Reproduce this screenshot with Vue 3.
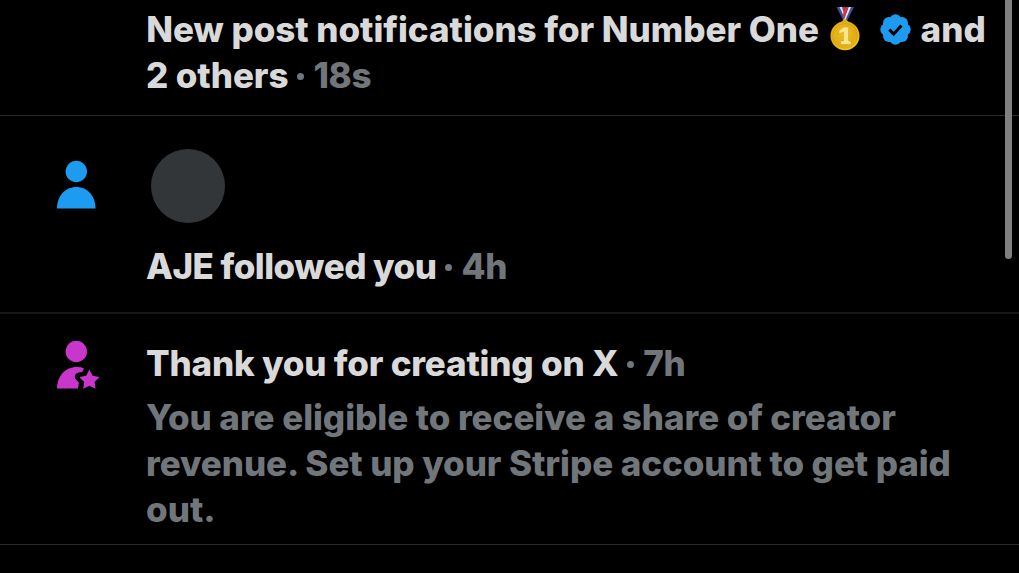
<script setup>
const badgePoints = Array.from({ length: 8 }, (_, i) => {
  const a = (i * Math.PI) / 4
  return { x: 15.5 + Math.cos(a) * 9.3, y: 15.5 + Math.sin(a) * 9.3 }
})
</script>

<template>
  <main class="feed">
    <article class="row first">
      <div class="side"></div>
      <div class="content">
        <div class="line">
          <span class="t-new">New post notifications for Number One</span>
          <svg class="medal" viewBox="0 0 30 46" width="30" height="46" role="img">
            <defs>
              <radialGradient id="gold" cx="45%" cy="40%" r="62%">
                <stop offset="0" stop-color="#ecc024" />
                <stop offset="0.7" stop-color="#e3ac12" />
                <stop offset="1" stop-color="#f5cd24" />
              </radialGradient>
            </defs>
            <path d="M6.500 1h4l5.500 13h-3z" fill="#3b4f9c" />
            <path d="M9.500 1h3l4 11-1 2z" fill="#dfe2ec" />
            <path d="M12 1h3.500l1 9-1 3z" fill="#c03648" />
            <path d="M24 1h-4.500l-6 13h4z" fill="#3b4f9c" />
            <path d="M21 1h-2.500l-5 13h2z" fill="#e6e6ee" />
            <path d="M18.500 1h-3l-3 9 2 3z" fill="#c43a4a" />
            <path d="M11.500 16l2-2.500h3l2 2.500v2h-7z" fill="#d9a51c" />
            <circle cx="15" cy="29.800" r="14.500" fill="url(#gold)" />
            <circle cx="15" cy="29.800" r="12.300" fill="none" stroke="#d29a12" stroke-width="0.600" />
            <path d="M9 24.500l5-3.500h4.500v14h2.500v3.500h-10.500v-3.500h3v-9l-4.500 1.800z" fill="#fae78b" stroke="#c8951a" stroke-width="0.400" />
          </svg>
          <svg class="badge" viewBox="0 0 31 31" width="31" height="31">
            <circle cx="15.500" cy="15.500" r="13.300" fill="#1d9bf0" />
            <circle v-for="(p, i) in badgePoints" :key="i" :cx="p.x" :cy="p.y" r="5.900" fill="#1d9bf0" />
            <path d="M9.300 15.600l4.400 4.400 7.700-8.500" fill="none" stroke="#000" stroke-width="3" />
          </svg>
          <span class="t-and">and</span>
        </div>
        <div class="line">
          <span class="t-others">2 others</span><i class="dot"></i><span class="time">18s</span>
        </div>
      </div>
    </article>

    <article class="row second">
      <div class="side">
        <svg class="person" viewBox="0 0 44 50" width="44" height="50">
          <circle cx="20.300" cy="11.500" r="10.700" fill="#1d9bf0" />
          <path d="M1 48.500C1 36 9 27 20.300 27s19.200 9 19.200 21.500z" fill="#1d9bf0" />
        </svg>
      </div>
      <div class="content">
        <div class="avatar"></div>
        <div class="line">
          <span class="t-follow">AJE followed you</span><i class="dot"></i><span class="time">4h</span>
        </div>
      </div>
    </article>

    <article class="row third">
      <div class="side">
        <svg class="creator" viewBox="0 0 44 50" width="44" height="50" fill="#c936cc">
          <circle cx="20.300" cy="11.500" r="10.700" />
          <path d="M1 48.500C1.400 36 9 27 21 27c2.500 0 4.800.4 6.900 1.200l-1.700 3.800-3.600.5c-3.600.6-4.900 4.700-2.500 7.100l2.800 3.200-.9 5.700z" />
          <path d="M33.400 29.600l3.200 6.200 6.900 1.100-4.900 5 1 6.900-6.200-3.100-6.300 3.100 1.100-6.900-4.900-5 6.900-1.100z" />
        </svg>
      </div>
      <div class="content">
        <div class="line">
          <span class="t-thank">Thank you for creating on X</span><i class="dot"></i><span class="time">7h</span>
        </div>
        <div class="detail">
          <div class="line t-you">You are eligible to receive a share of creator</div>
          <div class="line t-rev">revenue. Set up your Stripe account to get paid</div>
          <div class="line">out.</div>
        </div>
      </div>
    </article>
    <div class="scrollbar"></div>
  </main>
</template>

<style>
body { margin: 0; background: #000; }
</style>

<style scoped>
.feed {
  position: relative;
  height: 573px;
  overflow: hidden;
  background: #000;
  color: #d9d9d9;
  font: 800 35px/46px Inter, "Liberation Sans", sans-serif;
}
.row { display: flex; box-sizing: border-box; border-bottom: 1px solid #2a2b2d; }
.first { height: 116px; padding-top: 6px; }
.second { height: 198px; padding-top: 33px; border-bottom: 2px solid #17181a; }
.third { height: 231px; padding-top: 26px; }
.side { flex: none; width: 146px; }
.side svg { display: block; margin-left: 56px; }
.person { margin-top: 11px; }
.creator { margin-top: -0.5px; }
.content { flex: 1; }
.line { display: flex; align-items: center; height: 46px; white-space: pre; }
.medal { flex: none; align-self: flex-start; margin: 0 20px 0 10.7px; }
.badge { flex: none; margin-right: 10px; }
.avatar { width: 74px; height: 74px; margin: 0 0 20px 5px; border-radius: 50%; background: #333639; }
.dot { width: 7px; height: 7px; margin: 2px 9px 0; border-radius: 50%; background: #71767b; }
.time, .detail { color: #71767b; }
.time { letter-spacing: -0.3px; }
.detail { margin-top: 8px; }
.scrollbar {
  position: absolute;
  top: -10px;
  right: 7px;
  width: 7px;
  height: 269px;
  border-radius: 4px;
  background: #808080;
}
.t-new { margin-left: 0.3px; letter-spacing: -0.04px; }
.t-others { letter-spacing: -0.1px; }
.t-follow { letter-spacing: -0.52px; }
.t-thank { letter-spacing: -0.2px; }
.t-you { letter-spacing: -0.05px; }
.t-rev { letter-spacing: -0.08px; }
</style>
